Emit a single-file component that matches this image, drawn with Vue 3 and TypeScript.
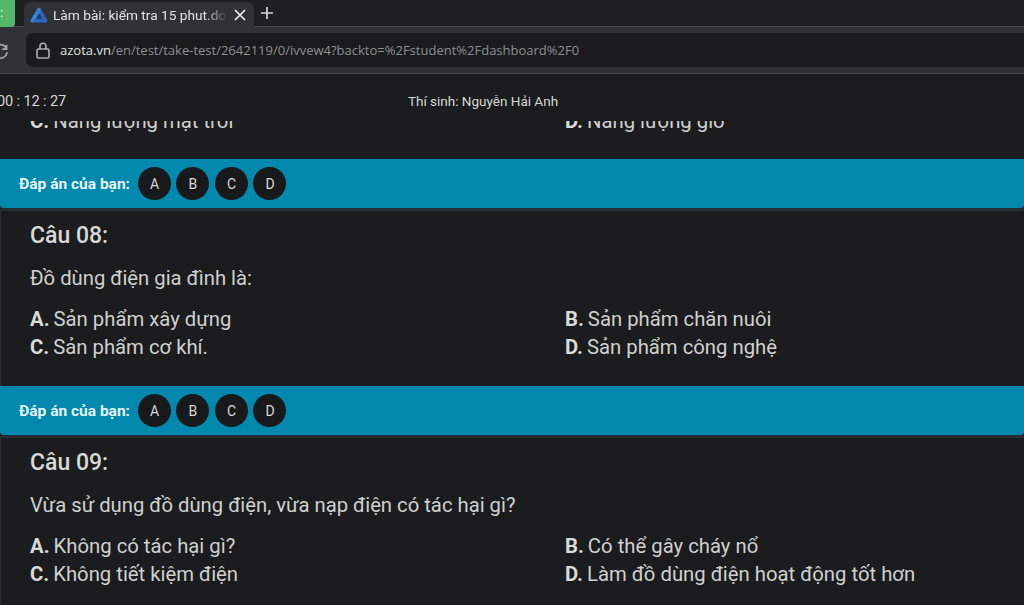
<script setup lang="ts">
interface Question {
  title: string
  text: string
  options: [string, string][]
}
const letters = ['A', 'B', 'C', 'D']
const questions: Question[] = [
  {
    title: 'Câu 08:',
    text: 'Đồ dùng điện gia đình là:',
    options: [
      ['A.', 'Sản phẩm xây dựng'],
      ['B.', 'Sản phẩm chăn nuôi'],
      ['C.', 'Sản phẩm cơ khí.'],
      ['D.', 'Sản phẩm công nghệ'],
    ],
  },
  {
    title: 'Câu 09:',
    text: 'Vừa sử dụng đồ dùng điện, vừa nạp điện có tác hại gì?',
    options: [
      ['A.', 'Không có tác hại gì?'],
      ['B.', 'Có thể gây cháy nổ'],
      ['C.', 'Không tiết kiệm điện'],
      ['D.', 'Làm đồ dùng điện hoạt động tốt hơn'],
    ],
  },
]
</script>

<template>
  <div class="page">
    <div class="tabstrip">
      <div class="profile">:</div>
      <div class="tab">
        <svg class="favicon" viewBox="0 0 18 16" width="18" height="16">
          <path d="M9 2.6 L15.6 13.6 H2.4 Z" fill="#1c3a66" stroke="#2b68bf" stroke-width="3.6" stroke-linejoin="round" />
          <path d="M9 2.6 L2.4 13.6" fill="none" stroke="#3a80dc" stroke-width="3.6" stroke-linecap="round" />
        </svg>
        <span class="tab-title">Làm bài: kiểm tra 15 phut.do</span>
        <svg class="tab-close" viewBox="0 0 12 12" width="12" height="12">
          <path d="M1 1 L11 11 M11 1 L1 11" stroke="#eceff1" stroke-width="1.7" fill="none" />
        </svg>
      </div>
      <svg class="new-tab" viewBox="0 0 12 12" width="12" height="12">
        <path d="M6 0 V12 M0 6 H12" stroke="#d5d8da" stroke-width="1.7" fill="none" />
      </svg>
    </div>
    <div class="toolbar">
      <svg class="reload" viewBox="0 0 16 16" width="18" height="18">
        <path d="M13 3.4 V7.2 H9.2 M13 7 A6 6 0 1 0 13.4 10" stroke="#a9abad" stroke-width="1.4" fill="none" />
      </svg>
      <div class="omnibox">
        <svg class="lock" viewBox="0 0 14 17" width="14" height="17">
          <rect x="1" y="7" width="12" height="9" rx="1.5" stroke="#adafb0" stroke-width="1.6" fill="none" />
          <path d="M4 7 V4.2 A3 3 0 0 1 10 4.2 V7" stroke="#adafb0" stroke-width="1.6" fill="none" />
        </svg>
        <span class="url"><span class="host">azota.vn</span>/en/test/take-test/2642119/0/ivvew4?backto=%2Fstudent%2Fdashboard%2F0</span>
      </div>
    </div>

    <div class="exam">
      <div class="topbar">
        <span class="timer">00 : 12 : 27</span>
        <span class="student">Thí sinh: Nguyễn Hải Anh</span>
      </div>

      <div class="partial">
        <div class="partial-row">
          <div class="option"><b>C.</b> Năng lượng mặt trời</div>
          <div class="option"><b>D.</b> Năng lượng gió</div>
        </div>
      </div>

      <div class="answer-bar first">
        <span class="answer-label">Đáp án của bạn:</span>
        <span v-for="l in letters" :key="l" class="bubble">{{ l }}</span>
      </div>

      <template v-for="(q, i) in questions" :key="q.title">
        <section class="question">
          <h2 class="q-title">{{ q.title }}</h2>
          <p class="q-text">{{ q.text }}</p>
          <div class="options">
            <div v-for="o in q.options" :key="o[0]" class="option"><b>{{ o[0] }}</b> {{ o[1] }}</div>
          </div>
        </section>
        <div v-if="i === 0" class="answer-bar">
          <span class="answer-label">Đáp án của bạn:</span>
          <span v-for="l in letters" :key="l" class="bubble">{{ l }}</span>
        </div>
      </template>
    </div>
  </div>
</template>

<style>
html, body { margin: 0; background: #1b1c1e; }
</style>

<style scoped>
.page {
  width: 1024px;
  height: 605px;
  overflow: hidden;
  background: #1b1c1e;
  font-family: Roboto, "Noto Sans", sans-serif;
  color: #d6d6d4;
  display: flex;
  flex-direction: column;
}
.tabstrip {
  height: 26px;
  flex: none;
  background: #1f2022;
  border-bottom: 1px solid #47494b;
  display: flex;
  align-items: flex-end;
}
.profile {
  width: 15px;
  height: 28px;
  margin-bottom: -1px;
  background: #52b868;
  color: #e8f5ea;
  font-size: 13px;
  line-height: 28px;
  border-bottom-right-radius: 4px;
  flex: none;
}
.tab {
  margin-left: 9px;
  width: 230px;
  height: 25px;
  margin-bottom: -1px;
  background: #303235;
  border-radius: 7px 7px 0 0;
  display: flex;
  align-items: center;
  padding: 0 8px 0 6px;
  box-sizing: border-box;
  flex: none;
}
.favicon { flex: none; }
.tab-title {
  margin-left: 5px;
  width: 174px;
  flex: none;
  font-size: 13.7px;
  color: #e2e3e4;
  white-space: nowrap;
  overflow: hidden;
  -webkit-mask-image: linear-gradient(to right, #000 88%, transparent);
  mask-image: linear-gradient(to right, #000 88%, transparent);
}
.tab-close { margin-left: 7px; flex: none; }
.new-tab { margin-left: 7px; margin-bottom: 7px; flex: none; }
.toolbar {
  height: 47px;
  flex: none;
  background: #303235;
  border-bottom: 1px solid #47494b;
  display: flex;
  align-items: center;
  box-sizing: border-box;
}
.reload { margin-left: -8px; flex: none; }
.omnibox {
  margin-left: 16px;
  flex: 1;
  height: 34px;
  background: #1a1b1c;
  border-radius: 7px 0 0 7px;
  display: flex;
  align-items: center;
  padding-left: 10px;
}
.lock { flex: none; }
.url {
  margin-left: 10px;
  font-family: "Open Sans", Roboto, sans-serif;
  font-size: 13px;
  color: #8d8f91;
  white-space: nowrap;
}
.host { color: #e2e3e4; }
.exam {
  flex: 1;
  min-height: 0;
}
.topbar {
  height: 47px;
  padding-top: 6px;
  box-sizing: border-box;
  display: flex;
  align-items: center;
  justify-content: center;
  position: relative;
  font-size: 13.5px;
  color: #d6d6d4;
  background: #1b1c1e;
}
.timer { position: absolute; left: -3px; top: 19px; font-size: 14.5px; letter-spacing: -0.1px; }
.student { margin-left: -58px; }
.partial { height: 15px; overflow: hidden; display: flex; align-items: flex-end; }
.partial-row { display: flex; padding-left: 30px; margin-bottom: 1px; }
.partial-row .option { width: 535px; flex: none; }
.answer-bar {
  height: 50px;
  background: #0088ad;
  border-radius: 0 0 4px 4px;
  display: flex;
  align-items: center;
  gap: 5.5px;
  padding-left: 19px;
  box-sizing: border-box;
  border-bottom: 1px solid #1c2f38;
}
.answer-bar.first { margin-top: 23px; }
.answer-label {
  font-size: 15.5px;
  font-weight: 700;
  color: #e6f6fa;
  margin-right: 2.5px;
}
.bubble {
  width: 33px;
  height: 33px;
  border-radius: 50%;
  background: #18191b;
  color: #d8d8d6;
  font-size: 14px;
  display: flex;
  align-items: center;
  justify-content: center;
  flex: none;
}
.question {
  padding: 11px 30px 0 29px;
  height: 177px;
  box-sizing: border-box;
  border-top: 2px solid #2b2d2f;
  border-left: 1px solid #2b2d2f;
}
.q-title {
  margin: 0;
  font-size: 23px;
  font-weight: 500;
  line-height: 27px;
  color: #d8d8d6;
}
.q-text {
  margin: 15px 0 0;
  font-size: 20.25px;
  line-height: 28px;
  color: #d0d0ce;
}
.options {
  margin-top: 13px;
  display: grid;
  grid-template-columns: 535px 1fr;
}
.option {
  font-size: 20.3px;
  line-height: 28px;
  color: #d0d0ce;
  white-space: nowrap;
}
.option b { font-weight: 700; color: #dadad8; margin-right: -1px; }
</style>
